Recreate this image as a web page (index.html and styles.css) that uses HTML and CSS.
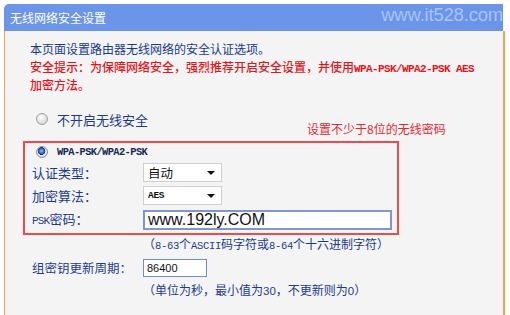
FILE: index.html
```html
<!DOCTYPE html>
<html lang="zh-CN">
<head>
<meta charset="utf-8">
<title>无线网络安全设置</title>
<link rel="stylesheet" href="styles.css">
</head>
<body>
<div class="panel">
  <div class="head">
    <span class="title">无线网络安全设置</span>
    <span class="wm">www.it528.com</span>
  </div>
  <div class="body">
    <div class="intro">
      <p class="note">本页面设置路由器无线网络的安全认证选项。</p>
      <p class="warn">安全提示：为保障网络安全，强烈推荐开启安全设置，并使用<span class="mono">WPA-PSK/WPA2-PSK AES</span><br>加密方法。</p>
    </div>
    <div class="opt off"><span class="radio"></span><span>不开启无线安全</span></div>
    <div class="anno">设置不少于8位的无线密码</div>
    <div class="box">
      <div class="opt on"><span class="radio checked"></span><span class="mono dark">WPA-PSK/WPA2-PSK</span></div>
      <div class="row"><span class="label">认证类型：</span><div class="select"><span>自动</span><i class="arrow"></i></div></div>
      <div class="row"><span class="label">加密算法：</span><div class="select"><span class="mono small">AES</span><i class="arrow"></i></div></div>
      <div class="row"><span class="label"><span class="mono lab">PSK</span>密码：</span><div class="field psk">www.192ly.COM</div></div>
    </div>
    <div class="hint">（<span class="mono">8-63</span>个<span class="mono">ASCII</span>码字符或<span class="mono">8-64</span>个十六进制字符）</div>
    <div class="row group"><span class="label">组密钥更新周期：</span><div class="field period">86400</div></div>
    <div class="hint unit">（单位为秒，最小值为<span class="num">30</span>，不更新则为<span class="num">0</span>）</div>
  </div>
</div>
</body>
</html>
```

FILE: styles.css
```css
* { box-sizing: border-box; }
html, body { margin: 0; padding: 0; background: #ffffff; }
body {
  font-family: "Noto Sans CJK SC", "Noto Sans", sans-serif;
  font-size: 12px;
  color: #1b3b8c;
  width: 510px;
  height: 315px;
  overflow: hidden;
}
p { margin: 0; height: auto; }

.panel {
  margin: 4px 0 0 4px;
  width: 501px;
}
.head {
  height: 27px;
  background: #6b95e9;
  border-radius: 5px 0 0 0;
  display: flex;
  align-items: center;
  justify-content: space-between;
  padding: 0 0 0 6px;
  width: 499px;
}
.title {
  color: #ffffff;
  font-size: 12px;
  line-height: 14px;
}
.wm {
  color: #a9c2f1;
  font-family: "Liberation Sans", Arial, sans-serif;
  font-size: 18.5px;
  line-height: 20px;
  margin-top: -6px;
  margin-right: 0;
  letter-spacing: -0.2px;
}

.body {
  position: relative;
  background: #f4f4f4;
  border-left: 1px solid #f2a456;
  border-right: 2px solid #f2a456;
  height: 284px;
  padding-top: 9px;
}

.intro { margin-left: 25px; }
.note { color: #163a8f; height: 18px; line-height: 18px; }
.warn { color: #e8141c; font-weight: 500; line-height: 18px; height: 36px; }
.mono {
  font-family: "Liberation Mono", "DejaVu Sans Mono", monospace;
  font-size: 11px;
  letter-spacing: -0.6px;
  line-height: 1;
}
.warn .mono { font-weight: bold; }

.opt {
  display: flex;
  align-items: center;
  height: 18px;
  color: #1b3b8c;
  font-size: 13px;
}
.opt.off { margin: 16px 0 0 31px; }
.radio {
  width: 12px;
  height: 12px;
  border-radius: 50%;
  border: 1px solid #9d9d9d;
  background: radial-gradient(circle at 40% 35%, #ffffff 0%, #e6e6e6 45%, #c9c9c9 100%);
  margin-right: 9px;
  flex: none;
}
.radio.checked {
  border-color: #8a94a6;
  background:
    radial-gradient(circle at 45% 40%, #9fc0f2 0%, #2f62b9 32%, #0e2f70 45%, transparent 50%),
    radial-gradient(circle at 40% 35%, #ffffff 0%, #e3e3e3 60%, #c4c4c4 100%);
}
.dark { color: #1a2a55; font-weight: bold; font-size: 10.4px; letter-spacing: -0.6px; }

.anno {
  position: absolute;
  left: 302px;
  top: 89px;
  line-height: 18px;
  color: #e4282e;
  font-size: 12px;
}

.box {
  margin: 13px 0 0 18px;
  width: 376px;
  height: 94px;
  border: 2px solid #ec4b4b;
  padding: 0;
}
.box .opt.on { margin-left: 11px; }
.row {
  display: flex;
  align-items: center;
  height: 23px;
  padding-left: 7px;
}
.label {
  width: 111px;
  flex: none;
  font-size: 13px;
  color: #1c3c8c;
  line-height: 18px;
}
.lab { font-size: 11px; letter-spacing: -0.8px; }
.select {
  width: 79px;
  height: 19px;
  background: #ffffff;
  border: 1px solid #cfcfcf;
  display: flex;
  align-items: center;
  justify-content: space-between;
  padding: 0 6px 0 4px;
  color: #111111;
  font-size: 12.5px;
}
.small { font-size: 9.5px; font-weight: bold; letter-spacing: -0.3px; }
.arrow {
  width: 0;
  height: 0;
  border-left: 4px solid transparent;
  border-right: 4px solid transparent;
  border-top: 4px solid #111111;
}
.field {
  background: #ffffff;
  color: #111111;
  font-family: "Liberation Sans", Arial, sans-serif;
  display: flex;
  align-items: center;
}
.psk {
  width: 249px;
  height: 20px;
  border: 2px solid #7f98c8;
  padding-left: 3px;
  font-size: 16px;
  margin-top: 2px;
}
.hint {
  margin-left: 138px;
  height: 18px;
  line-height: 18px;
  color: #1b3b8c;
}
.hint .mono { font-size: 10.5px; letter-spacing: -0.3px; }
.group { height: 22px; margin-top: 4px; padding-left: 27px; }
.group .label { width: 111px; font-size: 12.5px; }
.period {
  width: 64px;
  height: 18px;
  border: 1px solid #6d8fcb;
  padding-left: 3px;
  font-size: 11px;
}
.unit { margin-top: 2px; }
.num { font-family: "Liberation Sans", Arial, sans-serif; font-size: 11.5px; }
```
